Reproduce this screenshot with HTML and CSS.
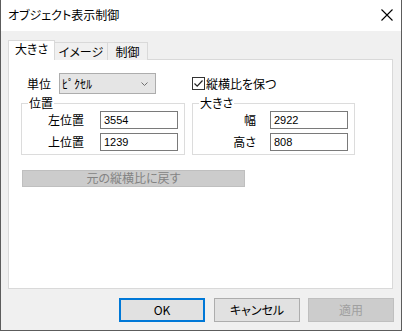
FILE: index.html
```html
<!DOCTYPE html>
<html lang="ja">
<head>
<meta charset="utf-8">
<link rel="stylesheet" href="styles.css">
</head>
<body>
<div class="window">
  <div class="titlebar">
    <span class="title">オブジェクト表示制御</span>
    <svg class="close" width="12" height="12" viewBox="0 0 12 12"><path d="M0.5 0.5 L11.5 11.5 M11.5 0.5 L0.5 11.5" stroke="#000" stroke-width="1.1" fill="none"/></svg>
  </div>
  <div class="content">
    <div class="tabs">
      <div class="tab tab-active tab-size">大きさ</div>
      <div class="tab tab-image">イメージ</div>
      <div class="tab tab-ctrl">制御</div>
    </div>
    <div class="panel">
      <div class="grid">
        <div class="unit-row">
          <span class="unit-label">単位</span>
          <div class="select"><span>ﾋﾟｸｾﾙ</span>
            <svg width="7" height="4" viewBox="0 0 7 4"><path d="M0.5 0.5 L3.5 3.5 L6.5 0.5" stroke="#707070" fill="none"/></svg>
          </div>
        </div>
        <label class="check-row">
          <span class="checkbox"><svg width="11" height="11" viewBox="0 0 11 11"><path d="M1.5 5.5 L4.2 8.2 L9.5 2.5" stroke="#222" stroke-width="1.2" fill="none"/></svg></span>
          <span>縦横比を保つ</span>
        </label>
        <fieldset class="group group-pos">
          <legend>位置</legend>
          <div class="fields">
            <span class="flabel">左位置</span><div class="input">3554</div>
            <span class="flabel">上位置</span><div class="input">1239</div>
          </div>
        </fieldset>
        <fieldset class="group group-size">
          <legend>大きさ</legend>
          <div class="fields">
            <span class="flabel">幅</span><div class="input">2922</div>
            <span class="flabel">高さ</span><div class="input">808</div>
          </div>
        </fieldset>
      </div>
      <div class="reset-btn">元の縦横比に戻す</div>
    </div>
    <div class="buttons">
      <div class="btn btn-default">OK</div>
      <div class="btn btn-cancel">キャンセル</div>
      <div class="btn btn-disabled">適用</div>
    </div>
  </div>
</div>
</body>
</html>
```
FILE: styles.css
```css
* { box-sizing: border-box; }
html, body { margin: 0; padding: 0; }
body {
  font-family: "Noto Sans CJK JP", sans-serif;
  font-size: 12px;
  color: #000;
  font-feature-settings: "palt";
  background: #f0f0f0;
}
.window {
  width: 402px;
  height: 331px;
  border: 1px solid #5c5c5c;
  border-top: none;
  background: #f0f0f0;
  display: flex;
  flex-direction: column;
}
.titlebar {
  height: 31px;
  background: #fff;
  display: flex;
  align-items: center;
  justify-content: space-between;
  padding: 0 8px 2px 7px;
}
.title { font-size: 12px; line-height: 16px; }
.close { display: block; margin-top: 1px; }
.content {
  padding: 9px 9px 0 7px;
  display: flex;
  flex-direction: column;
}
.tabs {
  display: flex;
  align-items: flex-end;
  height: 20px;
  margin-bottom: -1px;
  position: relative;
  z-index: 1;
}
.tab {
  border: 1px solid #d9d9d9;
  border-bottom: none;
  background: #f0f0f0;
  height: 18px;
  line-height: 15px;
  text-align: center;
  margin-left: -1px;
  padding-top: 1px;
}
.tab-active {
  background: #fff;
  height: 20px;
  line-height: 14px;
  margin-left: 0;
  padding-top: 1px;
  position: relative;
  z-index: 2;
}
.tab-size { width: 47px; }
.tab-image { width: 54px; }
.tab-ctrl { width: 41px; }
.panel {
  width: 385px;
  height: 230px;
  background: #fff;
  border: 1px solid #d9d9d9;
  padding: 13px 0 0 12px;
}
.grid {
  display: grid;
  grid-template-columns: 164px 163px;
  column-gap: 7px;
  row-gap: 2px;
}
.unit-row {
  display: flex;
  align-items: center;
  height: 21px;
}
.unit-label { flex: none; width: 38px; padding-left: 6px; line-height: 14px; }
.select {
  flex: none;
  width: 97px;
  height: 21px;
  background: #e5e5e5;
  border: 1px solid #adadad;
  display: flex;
  align-items: center;
  justify-content: space-between;
  padding: 0 7px 0 2px;
  line-height: 14px;
}
.select svg { display: block; }
.check-row {
  display: flex;
  align-items: center;
  height: 21px;
  gap: 1px;
}
.checkbox {
  width: 13px;
  height: 13px;
  border: 1px solid #333;
  background: #fff;
  display: flex;
  align-items: center;
  justify-content: center;
}
.checkbox svg { display: block; }
.group {
  margin: 0;
  border: 1px solid #dcdcdc;
  padding: 1px 6px 3px 6px;
  min-width: 0;
}
.group legend {
  padding: 0 1px;
  line-height: 14px;
  height: 14px;
}
.fields {
  display: grid;
  grid-template-columns: 1fr 78px;
  row-gap: 4px;
  align-items: center;
}
.group-pos .fields { column-gap: 16px; }
.group-size .fields { column-gap: 14px; }
.flabel { text-align: right; line-height: 14px; }
.input {
  height: 18px;
  border: 1px solid #7a7a7a;
  background: #fff;
  padding-left: 3px;
  font-family: "Liberation Sans", sans-serif;
  font-size: 11px;
  line-height: 16px;
}
.reset-btn {
  margin: 15px 0 0 1px;
  width: 223px;
  height: 17px;
  background: #cccccc;
  border: 1px solid #bfbfbf;
  color: #838383;
  text-align: center;
  line-height: 14px;
}
.buttons {
  display: flex;
  justify-content: flex-end;
  margin-top: 9px;
  margin-right: -2px;
}
.btn {
  width: 86px;
  height: 24px;
  border: 1px solid #adadad;
  background: #e1e1e1;
  display: flex;
  align-items: center;
  justify-content: center;
  line-height: 14px;
}
.btn-default { border: 2px solid #0078d7; }
.btn-cancel { margin-left: 9px; }
.btn-disabled {
  margin-left: 8px;
  background: #cccccc;
  border-color: #bfbfbf;
  color: #a0a0a0;
}
```
